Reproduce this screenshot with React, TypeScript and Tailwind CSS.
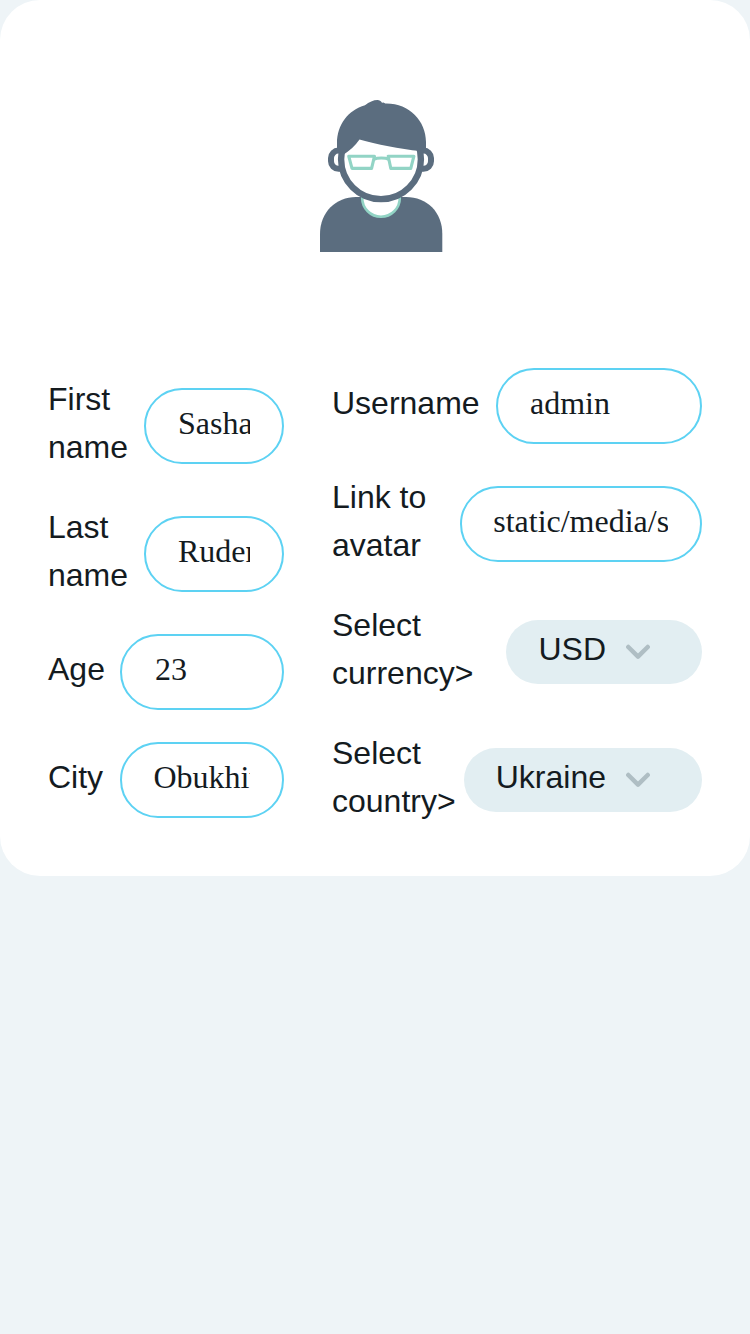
import { useId } from 'react';

function Avatar() {
  return (
    <svg className="h-[170px] w-[140px]" viewBox="310 90 140 170" fill="none" aria-hidden="true">
      <path d="M320 252V234C320 212 336 197 356 197H406C427 197 442.3 212 442.3 234V252Z" fill="#5b6d7f" />
      <circle cx="381" cy="198" r="18.8" fill="#fff" stroke="#92d4c5" strokeWidth="2.6" />
      <rect x="331" y="150.6" width="20" height="18.2" rx="7.5" stroke="#5b6d7f" strokeWidth="6" />
      <rect x="411" y="150.6" width="20" height="18.2" rx="7.5" stroke="#5b6d7f" strokeWidth="6" />
      <circle cx="381" cy="159.2" r="39.9" fill="#fff" stroke="#5b6d7f" strokeWidth="6.4" />
      <path
        d="M337 152V143C337 125 348 110 365 105.2C369 102 373.5 100 377.5 100C379.5 100 380.8 101 382 102.8L383.5 102.5L385.3 103.6C409 103 426 121 426 142V151H420C400 149.5 376 144 359.5 139.6C355 146 350 150.5 343 155Z"
        fill="#5b6d7f"
      />
      <g stroke="#92d4c5" strokeWidth="3.1" strokeLinejoin="round">
        <path d="M348.7 156.2H374.5L371.6 168.4H352Z" />
        <path d="M388.2 156.2H413.9L410.8 168.4H390.8Z" />
        <path d="M373.8 159.3C377.5 157.6 385 157.6 389 159.3" />
      </g>
    </svg>
  );
}

interface FieldProps {
  label: string;
  value: string;
  labelClass?: string;
  inputClass: string;
}

function Field({ label, value, labelClass = '', inputClass }: FieldProps) {
  const id = useId();
  return (
    <div className="flex items-center justify-between">
      <label htmlFor={id} className={`mt-[-3px] mb-[3px] ${labelClass}`}>
        {label}
      </label>
      <input
        id={id}
        defaultValue={value}
        className={`h-[76px] shrink-0 rounded-full border-2 border-[#5dd2f3] bg-white pr-8 pb-1.5 font-['Liberation_Serif',serif] text-[32px] leading-normal outline-none ${inputClass}`}
      />
    </div>
  );
}

function SelectField({ label, value, labelClass }: { label: string; value: string; labelClass: string }) {
  return (
    <div className="flex items-center justify-between">
      <span className={`mt-[-3px] mb-[3px] ${labelClass}`}>{label}</span>
      <button
        type="button"
        className="flex h-16 shrink-0 items-center gap-5 rounded-full bg-[#e2eef2] pr-[52px] pl-8"
      >
        <span className="mt-[-3px] mb-[3px]">{value}</span>
        <svg className="h-4 w-6" viewBox="0 0 24 16" fill="none" aria-hidden="true">
          <path
            d="M2.3 3L12 12.6L21.7 3"
            stroke="#afbec4"
            strokeWidth="4.5"
            strokeLinecap="round"
            strokeLinejoin="round"
          />
        </svg>
      </button>
    </div>
  );
}

export default function App() {
  return (
    <main className="min-h-screen bg-[#eef4f7] font-['Liberation_Sans',Arial,sans-serif] text-[32px] leading-[48px] text-[#141b1f]">
      <section className="h-[876px] rounded-[40px] bg-white px-12 pt-[90px]">
        <div className="ml-[262px] h-[278px]">
          <Avatar />
        </div>
        <form className="flex items-center gap-12">
          <div className="flex w-[236px] flex-col gap-8">
            <Field label="First name" value="Sasha" labelClass="w-20" inputClass="w-[140px] pl-8" />
            <Field label="Last name" value="Rudenko" labelClass="w-20" inputClass="w-[140px] pl-8" />
            <Field label="Age" value="23" inputClass="w-[164px] pl-[33px]" />
            <Field label="City" value="Obukhiv" inputClass="w-[164px] pl-[31.4px]" />
          </div>
          <div className="flex w-[370px] flex-col gap-8">
            <Field label="Username" value="admin" inputClass="w-[206px] pl-8" />
            <Field label="Link to avatar" value="static/media/store" labelClass="w-28" inputClass="w-[242px] pl-[31.2px]" />
            <SelectField label="Select currency>" value="USD" labelClass="w-[150px]" />
            <SelectField label="Select country>" value="Ukraine" labelClass="w-[126px]" />
          </div>
        </form>
      </section>
    </main>
  );
}
